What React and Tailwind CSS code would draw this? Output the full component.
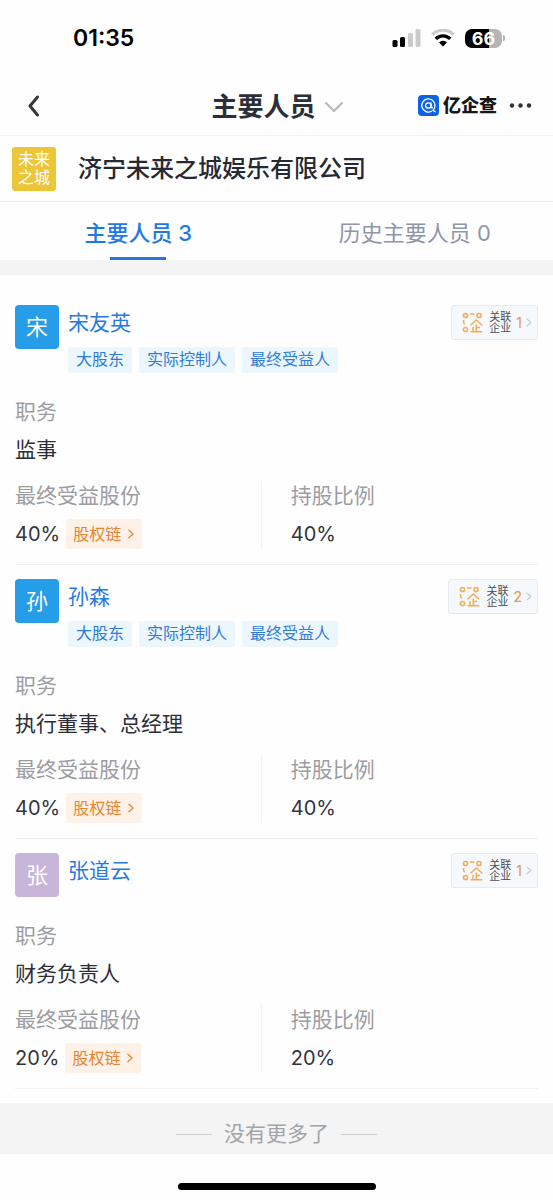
const people = [
  {
    name: '宋友英',
    initial: '宋',
    avatarClass: 'bg-[#259de9]',
    tags: ['大股东', '实际控制人', '最终受益人'],
    related: 1,
    position: '监事',
    benefit: '40%',
    ratio: '40%',
  },
  {
    name: '孙森',
    initial: '孙',
    avatarClass: 'bg-[#259de9]',
    tags: ['大股东', '实际控制人', '最终受益人'],
    related: 2,
    position: '执行董事、总经理',
    benefit: '40%',
    ratio: '40%',
  },
  {
    name: '张道云',
    initial: '张',
    avatarClass: 'bg-[#c7b6d9]',
    tags: [],
    related: 1,
    position: '财务负责人',
    benefit: '20%',
    ratio: '20%',
  },
];

function Chevron({ className }) {
  return (
    <svg className={className} viewBox="0 0 8 12" fill="none" stroke="currentColor" strokeLinecap="round" strokeLinejoin="round" aria-hidden="true">
      <path d="M1.5 1.5 6.5 6l-5 4.5" />
    </svg>
  );
}

function StatusBar() {
  return (
    <div className="flex h-[76px] items-center justify-between pr-12 pl-[73px]">
      <span className="text-[23px] font-semibold text-black">01:35</span>
      <div className="flex items-center gap-[10px]">
        <svg className="h-[19px] w-[29px]" viewBox="0 0 29 19" aria-hidden="true">
          <rect x="0.5" y="11" width="5" height="7" rx="1.5" fill="#000" />
          <rect x="8" y="8" width="5" height="10" rx="1.5" fill="#000" />
          <rect x="16" y="4" width="5" height="14" rx="1.5" fill="#cbcbcb" />
          <rect x="23.5" y="0" width="5" height="18" rx="1.5" fill="#cbcbcb" />
        </svg>
        <svg className="h-[18px] w-6" viewBox="0 0 24 18" fill="none" aria-hidden="true">
          <path d="M1.2 5.6A15.6 15.6 0 0 1 22.8 5.6" stroke="#cbcbcb" strokeWidth="3.2" />
          <path d="M4.800 9.900A10 10 0 0 1 19.200 9.900" stroke="#000" strokeWidth="3.400" />
          <path d="M12 17.500 8 13.500A5.600 5.600 0 0 1 16 13.500Z" fill="#000" />
        </svg>
        <div className="flex items-center gap-px">
          <div className="h-[19px] w-[37px] rounded-[7px] bg-[linear-gradient(to_right,#000_66%,#b5b5b5_66%)] text-center text-[18px] leading-[19px] font-bold text-white">
            66
          </div>
          <div className="h-[6px] w-[2px] rounded-r-full bg-[#b5b5b5]" />
        </div>
      </div>
    </div>
  );
}

function Header() {
  return (
    <header className="grid h-[60px] grid-cols-[1fr_auto_1fr] items-center border-b border-[#f1f1f2] pr-[20px] pl-[26px]">
      <button type="button" aria-label="返回" className="w-4 text-[#33363f]">
        <svg className="h-6 w-4" viewBox="0 0 16 24" fill="none" stroke="currentColor" strokeWidth="3" strokeLinecap="round" strokeLinejoin="round">
          <path d="M11.5 3 4 12l7.500 9" />
        </svg>
      </button>
      <h1>
        <button type="button" className="mr-1 flex items-center gap-2 pt-[2px] text-[26px] font-bold text-[#2b2f3a]">
          主要人员
          <svg className="h-3 w-5" viewBox="0 0 20 12" fill="none" stroke="#b9bbc0" strokeWidth="2.400" strokeLinecap="round" strokeLinejoin="round" aria-hidden="true">
            <path d="m2 2 8 8 8-8" />
          </svg>
        </button>
      </h1>
      <div className="flex items-center justify-end">
        <svg className="mr-1 h-[21px] w-[21px]" viewBox="0 0 21 21" fill="none" aria-hidden="true">
          <rect width="21" height="21" rx="4" fill="#0a63e9" />
          <path d="M13.500 16.300A6.600 6.600 0 1 1 17 10.500c0 2-.7 3.500-2 4.800l2.200 1.500" stroke="#fff" strokeWidth="1.300" strokeLinecap="round" />
          <circle cx="10.300" cy="10.500" r="2.700" stroke="#fff" strokeWidth="1.300" />
          <path d="M13 7.800v4.200c0 1.200 1.400 1.200 1.400 0" stroke="#fff" strokeWidth="1.200" strokeLinecap="round" />
        </svg>
        <span className="text-[18px] font-black text-[#14161c]">亿企查</span>
        <button type="button" aria-label="更多" className="ml-3">
          <svg className="h-[5px] w-6" viewBox="0 0 24 5" fill="#2f323b">
            <circle cx="3" cy="2.500" r="2.200" />
            <circle cx="11.500" cy="2.500" r="2.200" />
            <circle cx="20" cy="2.500" r="2.200" />
          </svg>
        </button>
      </div>
    </header>
  );
}

function RelatedButton({ count }) {
  return (
    <button type="button" className="flex h-[35px] shrink-0 items-center rounded-[3px] border border-[#e6ebf1] bg-[#f6f9fc] pr-[5px] pl-[10px]">
      <svg className="mr-[6px] h-[21px] w-[21px]" viewBox="0 0 21 21" fill="none" stroke="#f5ab55" strokeWidth="1.500" aria-hidden="true">
        <circle cx="3.500" cy="3.500" r="2.100" />
        <circle cx="17" cy="3.500" r="2.100" />
        <circle cx="3.500" cy="17.500" r="2.100" />
        <path d="M8 2h4.500M1.600 8v2.500l1 2" />
        <path d="M8.500 13.200 14.300 8l5.900 5.200M14.300 12.500v7M14.300 15.500h3.700M11 15v4.500M8.500 19.800h11.700" />
      </svg>
      <span className="mr-[5px] w-[22px] text-[11px] leading-[11px] text-[#4a4d57]">关联企业</span>
      <span className="text-[14px] text-[#ee923b]">{count}</span>
      <Chevron className="ml-1 h-[9px] w-[6px] stroke-[1.500] text-[#c3c7cf]" />
    </button>
  );
}

function PersonCard({ person }) {
  return (
    <li className="border-b border-[#f1f1f2] pt-[14px] pb-[15px] text-[21px] leading-[30px]">
      <div className="flex items-start">
        <div className={`flex h-11 w-11 shrink-0 items-center justify-center rounded text-[22px] text-white ${person.avatarClass}`}>
          {person.initial}
        </div>
        <div className="ml-[9px] flex-1">
          <a href="#" className="block leading-[36px] text-[#2678e3]">{person.name}</a>
          {person.tags.length > 0 && (
            <ul className="mt-[6px] flex gap-[7px]">
              {person.tags.map((tag) => (
                <li key={tag} className="rounded-[2px] bg-[#ebf6fd] px-2 pb-[2px] text-[16px] leading-[24px] text-[#2f7bd8]">
                  {tag}
                </li>
              ))}
            </ul>
          )}
        </div>
        <RelatedButton count={person.related} />
      </div>

      <dl className="mt-6">
        <dt className="text-[#9c9da2]">职务</dt>
        <dd className="mt-2 text-[#2c2f3a]">{person.position}</dd>
      </dl>

      <div className="mt-4 flex">
        <dl className="w-[47%]">
          <dt className="text-[#9c9da2]">最终受益股份</dt>
          <dd className="mt-2 flex items-center gap-[6px] text-[#33353d]">
            <span className="text-[20px]">{person.benefit}</span>
            <a href="#" className="flex items-center rounded-[2px] bg-[#fef1e7] px-[7px] text-[16px] text-[#e8842f]">
              股权链
              <Chevron className="ml-[6px] h-[10px] w-2 stroke-[1.500]" />
            </a>
          </dd>
        </dl>
        <dl className="flex-1 border-l border-[#f1f1f2] pl-[29px]">
          <dt className="text-[#9c9da2]">持股比例</dt>
          <dd className="mt-2 text-[20px] text-[#33353d]">{person.ratio}</dd>
        </dl>
      </div>
    </li>
  );
}

export default function App() {
  return (
    <div className="min-h-screen bg-[#fefefe] font-['Inter','Noto_Sans_CJK_SC',sans-serif]">
      <StatusBar />
      <Header />

      {/* Company */}
      <div className="flex h-[66px] items-center border-b border-[#f1f1f2] px-3">
        <div className="w-11 rounded-[3px] bg-[#ecc637] pt-[3px] pb-[5px] text-center text-[16px] leading-[18px] text-white">
          未来
          <br />
          之城
        </div>
        <h2 className="ml-[22px] text-[24px] font-medium text-[#262933]">济宁未来之城娱乐有限公司</h2>
      </div>

      {/* Tabs */}
      <div role="tablist" className="grid h-[58px] grid-cols-2 text-[22px]">
        <button type="button" role="tab" aria-selected="true" className="flex flex-col items-center font-medium text-[#1f78ea]">
          <span className="pt-[5px] leading-[53px]">主要人员 3</span>
          <span className="-mt-[3px] h-[3px] w-14 bg-[#2c74d9]" />
        </button>
        <button type="button" role="tab" aria-selected="false" className="flex flex-col items-center text-[#9095a9]">
          <span className="pt-[5px] leading-[53px]">历史主要人员 0</span>
        </button>
      </div>
      <div className="h-[15px] bg-[#f4f4f5]" />

      {/* People */}
      <ul className="px-[15px] pt-4 pb-[14px]">
        {people.map((person) => (
          <PersonCard key={person.name} person={person} />
        ))}
      </ul>

      <div className="flex items-center justify-center gap-3 bg-[#f4f4f5] pt-4 pb-[5px] text-[21px] leading-[30px] text-[#a3a4a9]">
        <span className="h-px w-9 bg-[#cfcfd2]" />
        没有更多了
        <span className="h-px w-9 bg-[#cfcfd2]" />
      </div>

      {/* Home indicator */}
      <div className="pt-[29px]">
        <div className="mx-auto h-[7px] w-[198px] rounded-full bg-black" />
      </div>
    </div>
  );
}
